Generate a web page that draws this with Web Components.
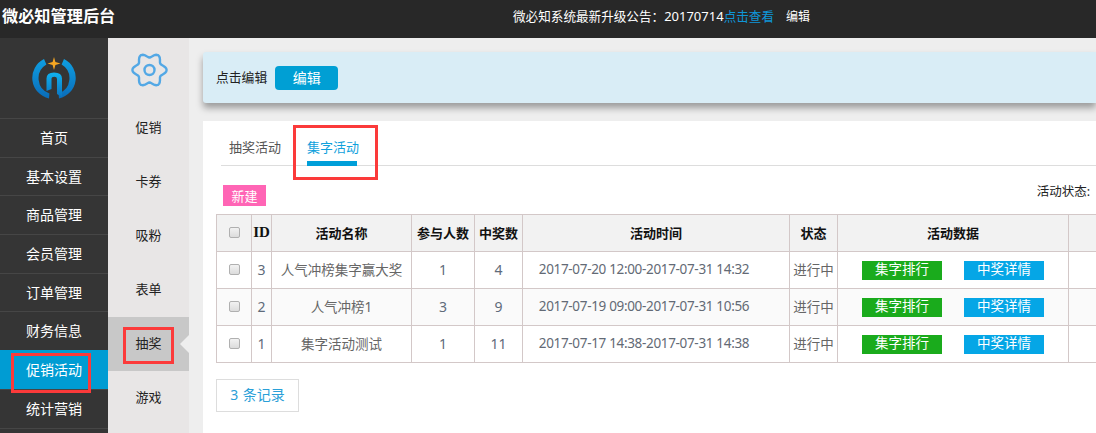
<!DOCTYPE html>
<html lang="zh">
<head>
<meta charset="utf-8">
<title>微必知管理后台</title>
<style>
    html, body { margin: 0; height: 100%; overflow: hidden; background: #eee; }
    body { font-family: "Noto Sans", "Noto Sans CJK SC", sans-serif; }
</style>
</head>
<body>
<admin-page></admin-page>
<script>
const CJK = '"Noto Sans", "Noto Sans CJK SC", sans-serif';

// wavy six-lobed outline of the gear, lobes at 0, 60, 120... degrees
function gearPath(cx, cy) {
    const pts = [];
    for (let deg = 0; deg < 360; deg += 5) {
        const rad = deg * Math.PI / 180;
        const r = 14.8 + 2.3 * Math.cos(6 * rad);
        pts.push(`${(cx + r * Math.cos(rad)).toFixed(2)} ${(cy + r * Math.sin(rad)).toFixed(2)}`);
    }
    return `M${pts.join('L')}Z`;
}

class TopBar extends HTMLElement {
    constructor() {
        super();
        this.attachShadow({ mode: 'open' });
        this.shadowRoot.innerHTML = `
        <style>
            :host { display: flex; align-items: center; height: 38px; background: #282828; color: #fff; font-family: ${CJK}; }
            .title { width: 513px; box-sizing: border-box; padding: 0 0 0 2px; font-size: 16.2px; font-weight: 700; margin-top: -8px; white-space: nowrap; }
            .notice { font-size: 12.6px; margin-top: -8px; white-space: nowrap; }
            .date { font-size: 13px; }
            a { color: #0f96d8; text-decoration: none; }
            .edit { font-size: 12px; margin-left: 12px; }
        </style>
        <div class="title">微必知管理后台</div>
        <div class="notice">微必知系统最新升级公告：<span class="date">20170714</span><a>点击查看</a><span class="edit">编辑</span></div>`;
    }
}

class MainNav extends HTMLElement {
    constructor() {
        super();
        this.attachShadow({ mode: 'open' });
        const items = ['首页', '基本设置', '商品管理', '会员管理', '订单管理', '财务信息', '促销活动', '统计营销', ''];
        this.shadowRoot.innerHTML = `
        <style>
            :host { display: block; position: relative; width: 108px; background: #353535; font-family: ${CJK}; overflow: hidden; }
            .logo { display: flex; justify-content: center; align-items: center; height: 80px; }
            .item { height: 37.7px; line-height: 38px; border-top: 1px solid #464646; color: #fff; font-size: 14px; text-align: center; }
            .item.on { background: #009cd3; border-top-color: #009cd3; }
            .mark { position: absolute; left: 11px; top: 315px; width: 80px; height: 40px; box-sizing: border-box; border: 3px solid #fb3a3a; }
        </style>
        <div class="logo">
            <svg width="46" height="46" viewBox="0 0 46 46">
                <defs>
                    <linearGradient id="lg" x1="0" y1="0" x2="0" y2="1">
                        <stop offset="0" stop-color="#0f9fe2"/>
                        <stop offset="1" stop-color="#0a6cb9"/>
                    </linearGradient>
                    <linearGradient id="ln" x1="0" y1="0" x2="0" y2="1">
                        <stop offset="0" stop-color="#10b2ef"/>
                        <stop offset="1" stop-color="#0b74c0"/>
                    </linearGradient>
                </defs>
                <path d="M13 4A21 21 0 0 0 18 43.4L18.4 38.4A16 16 0 0 1 15.4 9.5Z" fill="url(#lg)"/>
                <path d="M33 4A21 21 0 0 1 28 43.4L27.6 38.4A16 16 0 0 0 30.6 9.5Z" fill="url(#lg)"/>
                <path d="M15.5 36V23.5Q15.5 17.5 23 17.5Q31 17.5 31 23.5V42L26 39V24Q26 21.8 23.4 21.8Q20.5 21.8 20.5 24V34Z" fill="url(#ln)"/>
                <path d="M23 2L24.4 7.1L29.5 8.5L24.4 9.9L23 15L21.6 9.9L16.5 8.5L21.6 7.1Z" fill="#f5a623"/>
            </svg>
        </div>
        ${items.map((t, i) => `<div class="item${i === 6 ? ' on' : ''}">${t}</div>`).join('')}
        <div class="mark"></div>`;
    }
}

class SubNav extends HTMLElement {
    constructor() {
        super();
        this.attachShadow({ mode: 'open' });
        const items = ['促销', '卡券', '吸粉', '表单', '抽奖', '游戏'];
        this.shadowRoot.innerHTML = `
        <style>
            :host { display: block; position: relative; width: 81px; background: #e8e6e6; font-family: ${CJK}; }
            .gear { display: flex; justify-content: center; padding-top: 13px; height: 50px; }
            .item { position: relative; height: 54px; line-height: 52px; font-size: 13px; color: #222; text-align: center; }
            .item.on { background: #c8c8c8; }
            .item.on::after { content: ""; position: absolute; right: 0; top: 18px; border: 9px solid transparent; border-left-width: 0; border-right-color: #eee; }
            .mark { position: absolute; left: 15px; top: 289px; width: 51px; height: 37px; box-sizing: border-box; border: 3px solid #fb3a3a; }
        </style>
        <div class="gear">
            <svg width="38" height="38" viewBox="0 0 38 38" fill="none" stroke="#53a8e5" stroke-width="2.4" stroke-linejoin="round">
                <path d="${gearPath(19.5, 19)}"/>
                <circle cx="19.5" cy="19" r="5"/>
            </svg>
        </div>
        ${items.map((t, i) => `<div class="item${i === 4 ? ' on' : ''}">${t}</div>`).join('')}
        <div class="mark"></div>`;
    }
}

class EditCard extends HTMLElement {
    constructor() {
        super();
        this.attachShadow({ mode: 'open' });
        this.shadowRoot.innerHTML = `
        <style>
            :host { display: flex; align-items: center; gap: 8px; height: 51px; padding-left: 13px; background: #d9edf6; border-radius: 3px 0 0 3px; box-shadow: 0 5px 7px rgba(0,0,0,.35); font-size: 12.8px; color: #222; font-family: ${CJK}; }
            span { padding-bottom: 2px; }
            button { width: 63px; height: 24px; border: 0; border-radius: 4px; background: #009fd4; color: #fff; font: 14px ${CJK}; padding: 0 0 2px; }
        </style>
        <span>点击编辑</span><button>编辑</button>`;
    }
}

class ActivityRow extends HTMLElement {
    constructor() {
        super();
        this.attachShadow({ mode: 'open' });
        const get = k => this.getAttribute(k);
        this.shadowRoot.innerHTML = `
        <style>
            :host { display: grid; grid-template-columns: var(--cols); height: 37px; box-sizing: border-box; background: var(--row-bg, #fff); color: #666; font: 13.5px ${CJK}; border-bottom: 1px solid #d3c8c8; }
            div { display: flex; align-items: center; justify-content: center; padding-bottom: 2px; border-right: 1px solid #d3c8c8; white-space: nowrap; }
            .num { font-size: 14px; color: #5f6b7a; }
            .time { font-size: 13.5px; letter-spacing: -.33px; color: #636a75; padding-right: 24px; }
            .box { width: 9px; height: 9px; border: 1px solid #b0b0b0; border-radius: 2px; background: linear-gradient(#f2f2f2, #dcdcdc); }
            .data { gap: 22px; padding-bottom: 0; }
            .data span { width: 80px; height: 19px; line-height: 17px; text-align: center; color: #fff; }
            .green { background: #1aab1c; }
            .blue { background: #05a6e6; }
        </style>
        <div><span class="box"></span></div>
        <div class="num">${get('no')}</div>
        <div>${get('name')}</div>
        <div class="num">${get('joined')}</div>
        <div class="num">${get('won')}</div>
        <div class="time">${get('time')}</div>
        <div>进行中</div>
        <div class="data"><span class="green">集字排行</span><span class="blue">中奖详情</span></div>
        <div></div>`;
    }
}

class ActivityTable extends HTMLElement {
    constructor() {
        super();
        this.attachShadow({ mode: 'open' });
        this.shadowRoot.innerHTML = `
        <style>
            :host { display: block; width: 920px; --cols: 35px 20px 140px 63px 48px 267px 48px 231px 60px; border: 1px solid #d3c8c8; border-width: 1px 0 0 1px; font-family: ${CJK}; }
            .head { display: grid; grid-template-columns: var(--cols); height: 37px; box-sizing: border-box; background: #f2f2f2; border-bottom: 1px solid #d3c8c8; color: #111; font-size: 13px; font-weight: 700; }
            .head div { display: flex; align-items: center; justify-content: center; padding-bottom: 2px; border-right: 1px solid #d3c8c8; white-space: nowrap; }
            .id { font-family: "Liberation Serif", serif; font-size: 15px; }
            .box { width: 9px; height: 9px; border: 1px solid #b0b0b0; border-radius: 2px; background: linear-gradient(#f2f2f2, #dcdcdc); }
        </style>
        <div class="head">
            <div><span class="box"></span></div><div class="id">ID</div><div>活动名称</div><div>参与人数</div><div>中奖数</div><div>活动时间</div><div>状态</div><div>活动数据</div><div></div>
        </div>
        <slot></slot>`;
    }
}

class ActivityPanel extends HTMLElement {
    constructor() {
        super();
        this.attachShadow({ mode: 'open' });
        this.shadowRoot.innerHTML = `
        <style>
            :host { display: block; position: relative; margin-top: 18px; height: 312px; background: #fff; overflow: hidden; font-family: ${CJK}; }
            .tabs { display: flex; gap: 27px; height: 44px; margin-left: 18px; padding-left: 8px; border-bottom: 1px solid #ddd; font-size: 13px; line-height: 53px; color: #555; }
            .tabs span { height: 45px; box-sizing: border-box; width: 51px; white-space: nowrap; }
            .tabs .on { color: #10a1dc; border-bottom: 5px solid #009fd9; width: 50px; }
            .tools { display: flex; justify-content: space-between; align-items: center; height: 48px; padding: 0 6px 0 20px; font-size: 12.5px; color: #222; }
            .new { width: 43px; height: 21px; line-height: 22px; margin-top: 11px; background: #ff65b5; color: #fff; text-align: center; font-size: 13px; }
            .wrap { margin-left: 13px; }
            .pager { display: inline-block; margin: 16px 0 0 13px; width: 83px; height: 33px; line-height: 29px; box-sizing: border-box; border: 1px solid #ddd; color: #2aa0d8; font-size: 14px; text-align: center; word-spacing: 1px; }
            .mark { position: absolute; left: 90px; top: 4px; width: 85px; height: 55px; box-sizing: border-box; border: 3px solid #fb3a3a; }
        </style>
        <div class="tabs"><span>抽奖活动</span><span class="on">集字活动</span></div>
        <div class="tools"><span class="new">新建</span><span>活动状态:</span></div>
        <div class="wrap"><slot></slot></div>
        <div class="pager">3 条记录</div>
        <div class="mark"></div>`;
    }
}

class AdminPage extends HTMLElement {
    constructor() {
        super();
        this.attachShadow({ mode: 'open' });
        this.shadowRoot.innerHTML = `
        <style>
            :host { display: block; height: 433px; width: 1096px; overflow: hidden; }
            .body { display: flex; height: 395px; }
            main { flex: 1; min-width: 0; padding: 14px 0 0 14px; }
        </style>
        <top-bar></top-bar>
        <div class="body">
            <main-nav></main-nav>
            <sub-nav></sub-nav>
            <main>
                <edit-card></edit-card>
                <activity-panel>
                    <activity-table>
                        <activity-row no="3" name="人气冲榜集字赢大奖" joined="1" won="4" time="2017-07-20 12:00-2017-07-31 14:32"></activity-row>
                        <activity-row no="2" name="人气冲榜1" joined="3" won="9" time="2017-07-19 09:00-2017-07-31 10:56" style="--row-bg:#fafafa"></activity-row>
                        <activity-row no="1" name="集字活动测试" joined="1" won="11" time="2017-07-17 14:38-2017-07-31 14:38"></activity-row>
                    </activity-table>
                </activity-panel>
            </main>
        </div>`;
    }
}

customElements.define('top-bar', TopBar);
customElements.define('main-nav', MainNav);
customElements.define('sub-nav', SubNav);
customElements.define('edit-card', EditCard);
customElements.define('activity-row', ActivityRow);
customElements.define('activity-table', ActivityTable);
customElements.define('activity-panel', ActivityPanel);
customElements.define('admin-page', AdminPage);
</script>
</body>
</html>
